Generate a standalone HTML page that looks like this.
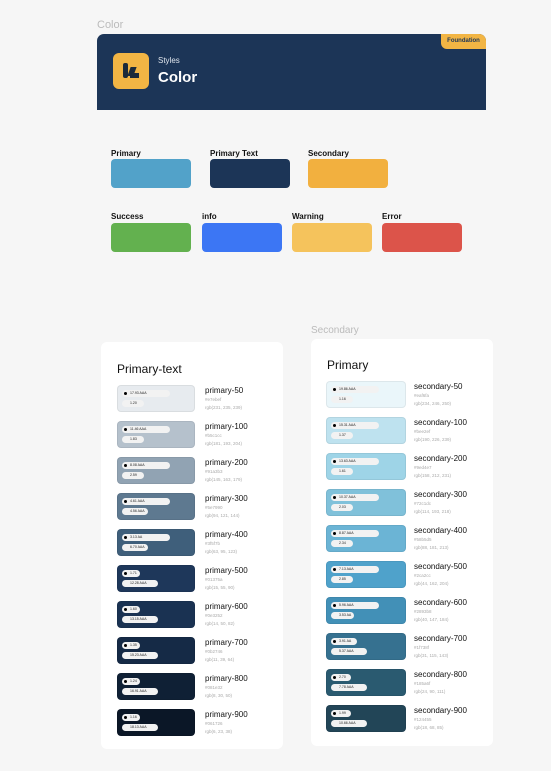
<!DOCTYPE html>
<html><head><meta charset="utf-8"><style>
*{margin:0;padding:0;box-sizing:border-box}
body{width:551px;height:771px;background:#f6f6f6;font-family:"Liberation Sans",sans-serif;position:relative;overflow:hidden}
.a{position:absolute}
.lbl{font-size:8px;font-weight:bold;color:#111}
.sw{position:absolute;border-radius:4px}
.card{position:absolute;background:#fff;border-radius:6px}
.r{position:absolute;left:0;width:170px;height:28px}
.s{position:absolute;left:0;top:0;width:78px;height:27px;border-radius:4px;border:1px solid rgba(0,0,0,.06)}
.p1,.p2{position:absolute;left:4px;height:7px;border-radius:4px;background:#f2f2f2;font-size:3.5px;line-height:7px;padding:0 3px 0 8px;color:#222;white-space:nowrap;overflow:hidden}
.p1{top:4px;width:48px}.p2{top:14px;min-width:22px;width:auto}
.p1:before{content:"";position:absolute;left:2px;top:2px;width:3px;height:3px;border-radius:50%;background:#000}
.n{position:absolute;left:88px;top:1px;font-size:8px;color:#111}
.h{position:absolute;left:88px;top:12px;font-size:4.5px;color:#aaa}
.g{position:absolute;left:88px;top:20px;font-size:4.5px;color:#aaa}
</style></head><body>
<div class="a" style="left:97px;top:19px;font-size:11px;color:#bbb">Color</div>
<div class="a" style="left:97px;top:34px;width:389px;height:76px;background:#1c3557;border-radius:7px 7px 0 0"></div>
<div class="a" style="left:441px;top:34px;width:45px;height:15px;background:#f2b544;border-radius:0 7px 0 6px;font-size:6px;font-weight:bold;color:#1c3557;line-height:15px;text-align:center">Foundation</div>
<div class="a" style="left:113px;top:53px;width:36px;height:36px;background:#f2b544;border-radius:6px">
<div class="a" style="left:10px;top:10px;width:5px;height:15px;background:#1c2a3a;border-radius:2px"></div>
<div class="a" style="left:16px;top:14px;width:6px;height:9px;background:#1c2a3a;transform:skewX(-20deg)"></div>
<div class="a" style="left:17px;top:20px;width:9px;height:5px;background:#1c2a3a"></div>
</div>
<div class="a" style="left:158px;top:56px;font-size:8px;color:#dfe5ec">Styles</div>
<div class="a" style="left:158px;top:69px;font-size:15px;font-weight:bold;color:#fff">Color</div>

<div class="a lbl" style="left:111px;top:149px">Primary</div>
<div class="sw" style="left:111px;top:159px;width:80px;height:29px;background:#52a2c9"></div>
<div class="a lbl" style="left:210px;top:149px">Primary Text</div>
<div class="sw" style="left:210px;top:159px;width:80px;height:29px;background:#1c3557"></div>
<div class="a lbl" style="left:308px;top:149px">Secondary</div>
<div class="sw" style="left:308px;top:159px;width:80px;height:29px;background:#f2b03f"></div>
<div class="a lbl" style="left:111px;top:212px">Success</div>
<div class="sw" style="left:111px;top:223px;width:80px;height:29px;background:#63b14f"></div>
<div class="a lbl" style="left:202px;top:212px">info</div>
<div class="sw" style="left:202px;top:223px;width:80px;height:29px;background:#3c76f4"></div>
<div class="a lbl" style="left:292px;top:212px">Warning</div>
<div class="sw" style="left:292px;top:223px;width:80px;height:29px;background:#f5c35c"></div>
<div class="a lbl" style="left:382px;top:212px">Error</div>
<div class="sw" style="left:382px;top:223px;width:80px;height:29px;background:#dc544a"></div>

<div class="a" style="left:311px;top:325px;font-size:10px;color:#bbb">Secondary</div>

<div class="card" style="left:101px;top:342px;width:182px;height:407px">
<div class="a" style="left:16px;top:20px;font-size:12px;color:#111">Primary-text</div>
<div class="r" style="left:16px;top:43px"><div class="s" style="background:#e7ebef"><div class="p1">17.93 AAA</div><div class="p2">1.20</div></div><div class="n">primary-50</div><div class="h">#e7ebef</div><div class="g">rgb(231, 235, 239)</div></div>
<div class="r" style="left:16px;top:79px"><div class="s" style="background:#b5c1cc"><div class="p1">11.46 AAA</div><div class="p2">1.83</div></div><div class="n">primary-100</div><div class="h">#b5c1cc</div><div class="g">rgb(181, 193, 204)</div></div>
<div class="r" style="left:16px;top:115px"><div class="s" style="background:#91a3b3"><div class="p1">8.08 AAA</div><div class="p2">2.59</div></div><div class="n">primary-200</div><div class="h">#91a3b3</div><div class="g">rgb(145, 163, 179)</div></div>
<div class="r" style="left:16px;top:151px"><div class="s" style="background:#5e7990"><div class="p1">4.61 AAA</div><div class="p2">4.56 AAA</div></div><div class="n">primary-300</div><div class="h">#5e7990</div><div class="g">rgb(94, 121, 144)</div></div>
<div class="r" style="left:16px;top:187px"><div class="s" style="background:#3f5f7b"><div class="p1">3.13 AA</div><div class="p2">6.70 AAA</div></div><div class="n">primary-400</div><div class="h">#3f5f7b</div><div class="g">rgb(63, 95, 123)</div></div>
<div class="r" style="left:16px;top:223px"><div class="s" style="background:#1e375a"><div class="p1" style="width:18px">1.71</div><div class="p2" style="width:36px">12.28 AAA</div></div><div class="n">primary-500</div><div class="h">#01375a</div><div class="g">rgb(15, 55, 90)</div></div>
<div class="r" style="left:16px;top:259px"><div class="s" style="background:#1a3252"><div class="p1" style="width:18px">1.60</div><div class="p2" style="width:36px">13.15 AAA</div></div><div class="n">primary-600</div><div class="h">#0e3252</div><div class="g">rgb(14, 50, 82)</div></div>
<div class="r" style="left:16px;top:295px"><div class="s" style="background:#152a46"><div class="p1" style="width:18px">1.35</div><div class="p2" style="width:36px">15.23 AAA</div></div><div class="n">primary-700</div><div class="h">#0b2746</div><div class="g">rgb(11, 39, 64)</div></div>
<div class="r" style="left:16px;top:331px"><div class="s" style="background:#0f2035"><div class="p1" style="width:18px">1.24</div><div class="p2" style="width:36px">16.91 AAA</div></div><div class="n">primary-800</div><div class="h">#081e32</div><div class="g">rgb(8, 30, 50)</div></div>
<div class="r" style="left:16px;top:367px"><div class="s" style="background:#0b1727"><div class="p1" style="width:18px">1.16</div><div class="p2" style="width:36px">18.13 AAA</div></div><div class="n">primary-900</div><div class="h">#061726</div><div class="g">rgb(6, 23, 38)</div></div>
</div>

<div class="card" style="left:311px;top:339px;width:182px;height:407px">
<div class="a" style="left:16px;top:19px;font-size:12px;color:#111">Primary</div>
<div class="r" style="left:15px;top:42px"><div class="s" style="width:80px;background:#eaf6fa"><div class="p1">19.86 AAA</div><div class="p2">1.16</div></div><div class="n">secondary-50</div><div class="h">#eaf6fa</div><div class="g">rgb(234, 246, 250)</div></div>
<div class="r" style="left:15px;top:78px"><div class="s" style="width:80px;background:#bee2ef"><div class="p1">15.31 AAA</div><div class="p2">1.37</div></div><div class="n">secondary-100</div><div class="h">#bee2ef</div><div class="g">rgb(190, 226, 239)</div></div>
<div class="r" style="left:15px;top:114px"><div class="s" style="width:80px;background:#9ed4e7"><div class="p1">13.63 AAA</div><div class="p2">1.61</div></div><div class="n">secondary-200</div><div class="h">#9ed4e7</div><div class="g">rgb(158, 212, 231)</div></div>
<div class="r" style="left:15px;top:150px"><div class="s" style="width:80px;background:#80c1da"><div class="p1">10.37 AAA</div><div class="p2">2.03</div></div><div class="n">secondary-300</div><div class="h">#72c1dc</div><div class="g">rgb(114, 193, 218)</div></div>
<div class="r" style="left:15px;top:186px"><div class="s" style="width:80px;background:#6bb4d5"><div class="p1">8.87 AAA</div><div class="p2">2.34</div></div><div class="n">secondary-400</div><div class="h">#58b5d5</div><div class="g">rgb(88, 181, 213)</div></div>
<div class="r" style="left:15px;top:222px"><div class="s" style="width:80px;background:#4fa2cb"><div class="p1">7.13 AAA</div><div class="p2">2.85</div></div><div class="n">secondary-500</div><div class="h">#2ca2cc</div><div class="g">rgb(44, 162, 204)</div></div>
<div class="r" style="left:15px;top:258px"><div class="s" style="width:80px;background:#4290b7"><div class="p1">5.96 AAA</div><div class="p2">3.53 AA</div></div><div class="n">secondary-600</div><div class="h">#2893b8</div><div class="g">rgb(40, 147, 184)</div></div>
<div class="r" style="left:15px;top:294px"><div class="s" style="width:80px;background:#367190"><div class="p1" style="width:26px">3.91 AA</div><div class="p2" style="width:36px">5.37 AAA</div></div><div class="n">secondary-700</div><div class="h">#1f738f</div><div class="g">rgb(31, 115, 143)</div></div>
<div class="r" style="left:15px;top:330px"><div class="s" style="width:80px;background:#2a5a70"><div class="p1" style="width:20px">2.70</div><div class="p2" style="width:36px">7.78 AAA</div></div><div class="n">secondary-800</div><div class="h">#185a6f</div><div class="g">rgb(24, 90, 111)</div></div>
<div class="r" style="left:15px;top:366px"><div class="s" style="width:80px;background:#224557"><div class="p1" style="width:20px">1.99</div><div class="p2" style="width:36px">10.66 AAA</div></div><div class="n">secondary-900</div><div class="h">#124455</div><div class="g">rgb(18, 68, 85)</div></div>
</div>
</body></html>
